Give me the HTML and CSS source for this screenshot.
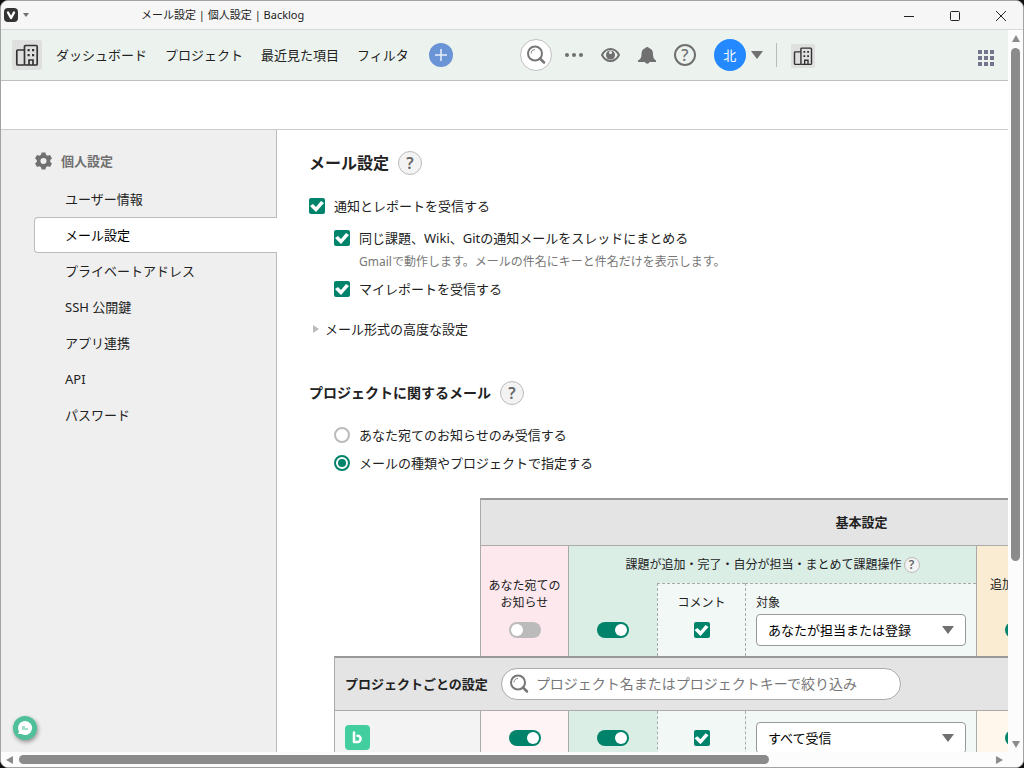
FILE: index.html
```html
<!DOCTYPE html>
<html lang="ja">
<head>
    <meta charset="UTF-8">
    <meta name="viewport" content="width=device-width, initial-scale=1.0">
    <title>メール設定 | 個人設定 | Backlog</title>
    <link rel="stylesheet" href="styles.css">
</head>
<body>

<svg class="defs" aria-hidden="true">
    <symbol id="building" viewBox="0 0 24 24">
        <path d="M9 7H2.800a1 1 0 0 0-1 1v13a1 1 0 0 0 1 1H9M10.500 2.500h10.700a1 1 0 0 1 1 1V21a1 1 0 0 1-1 1H10.500a1 1 0 0 1-1-1V3.500a1 1 0 0 1 1-1zM14 22v-5h4v5" fill="none" stroke="#333" stroke-width="1.700"/>
        <path d="M12.500 6h2.200v2.200h-2.200zM17 6h2.200v2.200H17zM12.500 11h2.200v2.200h-2.200zM17 11h2.200v2.200H17z" fill="#333"/>
    </symbol>
    <symbol id="search" viewBox="0 0 20 20">
        <circle cx="9" cy="8.500" r="7" fill="none" stroke="#777" stroke-width="2"/>
        <path d="M5 8.500a4 4 0 0 1 4-4" fill="none" stroke="#888" stroke-width="1"/>
        <path d="M14 13.500l4 4" stroke="#777" stroke-width="2.500" stroke-linecap="round"/>
    </symbol>
</svg>

<div class="window">
    <div class="titlebar">
        <svg class="app-icon" viewBox="0 0 14 14"><rect width="14" height="14" rx="4" fill="#333"/><path d="M4 4.500l3 5.500 3-5.500" fill="none" stroke="#fff" stroke-width="2.400" stroke-linecap="round" stroke-linejoin="round"/></svg>
        <span class="caret caret-small"></span>
        <span class="window-title">メール設定 | 個人設定 | Backlog</span>
        <div class="window-buttons">
            <button aria-label="最小化"><svg viewBox="0 0 12 12"><path d="M1 6.500h10"/></svg></button>
            <button aria-label="最大化"><svg viewBox="0 0 12 12"><rect x="1.500" y="1.500" width="9" height="9" rx="1"/></svg></button>
            <button aria-label="閉じる"><svg viewBox="0 0 12 12"><path d="M1 1l10 10M11 1L1 11"/></svg></button>
        </div>
    </div>

    <div class="viewport">
        <div class="page">
            <header class="header">
                <a href="#" class="space-icon" aria-label="スペース"><svg><use href="#building"/></svg></a>
                <nav class="nav">
                    <a href="#">ダッシュボード</a>
                    <a href="#">プロジェクト</a>
                    <a href="#">最近見た項目</a>
                    <a href="#">フィルタ</a>
                </nav>
                <button class="add" aria-label="追加"><svg viewBox="0 0 24 24"><path d="M12 6v12M6 12h12" stroke="#e9f0fa" stroke-width="1.500"/></svg></button>
                <div class="tools">
                    <button class="search-button" aria-label="検索"><svg><use href="#search"/></svg></button>
                    <button class="tool" aria-label="その他"><svg viewBox="0 0 22 22"><g fill="#707070"><circle cx="4" cy="11" r="2"/><circle cx="11" cy="11" r="2"/><circle cx="18" cy="11" r="2"/></g></svg></button>
                    <button class="tool" aria-label="ウォッチ"><svg viewBox="0 0 22 22"><path d="M2 11c2-4 5-6 8.500-6s6.500 2 8.500 6c-2 4-5 6-8.500 6S4 15 2 11z" fill="none" stroke="#707070" stroke-width="2"/><circle cx="10.500" cy="11" r="4.500" fill="#707070"/><circle cx="10.500" cy="8.500" r="1.500" fill="#ecf3ef"/></svg></button>
                    <button class="tool" aria-label="お知らせ"><svg viewBox="0 0 22 22"><path d="M8.500 4a2 2 0 0 1 3.500 0c3 1 4 3 4 6 0 3 .5 5 3 6.500V18h-6.500a2.300 2.300 0 0 1-4.500 0H1v-1.500C4 15 4.500 13 4.500 10c0-3 1-5 4-6z" fill="#707070"/></svg></button>
                    <button class="tool" aria-label="ヘルプ"><span class="round-help">?</span></button>
                    <button class="avatar">北</button>
                </div>
                <span class="caret"></span>
                <span class="divider"></span>
                <a href="#" class="space-icon space-icon-small" aria-label="組織"><svg><use href="#building"/></svg></a>
                <button class="apps" aria-label="アプリ一覧"><svg viewBox="0 0 16 16"><path d="M0 0h4v4H0zM6 0h4v4H6zM12 0h4v4h-4zM0 6h4v4H0zM6 6h4v4H6zM12 6h4v4h-4zM0 12h4v4H0zM6 12h4v4H6zM12 12h4v4h-4z" fill="#74748c"/></svg></button>
            </header>

            <div class="subheader"></div>

            <div class="content">
                <aside class="sidebar">
                    <div class="sidebar-title">
                        <svg viewBox="0 0 20 20"><path fill="#707070" fill-rule="evenodd" d="M8 1h4l.6 2.400 1.900 1.100 2.400-.7 2 3.500-1.800 1.700v2l1.800 1.700-2 3.500-2.400-.7-1.900 1.100L12 19H8l-.6-2.400-1.900-1.100-2.400.7-2-3.500L2.900 11V9L1.100 7.300l2-3.500 2.400.7 1.900-1.100zM10 6.800a3.200 3.200 0 1 0 0 6.400 3.200 3.200 0 0 0 0-6.400z"/></svg>
                        個人設定
                    </div>
                    <ul class="menu">
                        <li><a href="#">ユーザー情報</a></li>
                        <li><a href="#" class="active">メール設定</a></li>
                        <li><a href="#">プライベートアドレス</a></li>
                        <li><a href="#">SSH 公開鍵</a></li>
                        <li><a href="#">アプリ連携</a></li>
                        <li><a href="#">API</a></li>
                        <li><a href="#">パスワード</a></li>
                    </ul>
                </aside>

                <main class="main">
                    <div class="heading">
                        <h1>メール設定</h1>
                        <button class="help" aria-label="ヘルプ">?</button>
                    </div>

                    <div class="receive">
                        <label class="option"><input type="checkbox" checked> 通知とレポートを受信する</label>
                        <div class="nested">
                            <label class="option"><input type="checkbox" checked> 同じ課題、Wiki、Gitの通知メールをスレッドにまとめる</label>
                            <p class="note">Gmailで動作します。メールの件名にキーと件名だけを表示します。</p>
                            <label class="option"><input type="checkbox" checked> マイレポートを受信する</label>
                        </div>
                    </div>

                    <details class="advanced">
                        <summary>メール形式の高度な設定</summary>
                    </details>

                    <div class="heading">
                        <h2>プロジェクトに関するメール</h2>
                        <button class="help" aria-label="ヘルプ">?</button>
                    </div>

                    <div class="choices">
                        <label class="option"><input type="radio" name="target"> あなた宛てのお知らせのみ受信する</label>
                        <label class="option"><input type="radio" name="target" checked> メールの種類やプロジェクトで指定する</label>
                    </div>

                    <table class="settings">
                        <colgroup>
                            <col class="col-name">
                            <col class="col-switch">
                            <col class="col-issue">
                            <col class="col-switch">
                            <col class="col-target">
                            <col class="col-switch">
                            <col class="col-rest">
                        </colgroup>
                        <thead>
                            <tr class="row-basic">
                                <td class="blank" rowspan="3"></td>
                                <th colspan="6">基本設定</th>
                            </tr>
                            <tr class="row-group">
                                <td class="pink" rowspan="2">
                                    <div class="stack">
                                        <label for="toMe">あなた宛ての<br>お知らせ</label>
                                        <input type="checkbox" class="switch" id="toMe">
                                    </div>
                                </td>
                                <td class="green" colspan="3">課題が追加・完了・自分が担当・まとめて課題操作<button class="help help-small" aria-label="ヘルプ">?</button></td>
                                <td class="orange" rowspan="2">
                                    <div class="stack">
                                        <label for="added">追加</label>
                                        <input type="checkbox" class="switch" id="added" checked>
                                    </div>
                                </td>
                                <td class="orange plain" rowspan="2"></td>
                            </tr>
                            <tr class="row-sub">
                                <td class="green"><div class="stack"><input type="checkbox" class="switch" aria-label="課題" checked></div></td>
                                <td class="light dashed">
                                    <div class="stack">
                                        <label for="comment">コメント</label>
                                        <input type="checkbox" id="comment" checked>
                                    </div>
                                </td>
                                <td class="light dashed target">
                                    <label for="scope">対象</label>
                                    <div class="select"><select id="scope"><option>あなたが担当または登録</option></select></div>
                                </td>
                            </tr>
                        </thead>
                        <tbody>
                            <tr class="row-search">
                                <th colspan="7">
                                    <div class="search-row">
                                        プロジェクトごとの設定
                                        <div class="search-box">
                                            <svg><use href="#search"/></svg>
                                            <input type="text" placeholder="プロジェクト名またはプロジェクトキーで絞り込み" aria-label="プロジェクトを絞り込み">
                                        </div>
                                    </div>
                                </th>
                            </tr>
                            <tr class="row-project">
                                <td class="name"><svg class="project-icon" viewBox="0 0 25 25"><rect width="25" height="25" rx="4" fill="#42ce9f"/><path d="M9 7.500v9.500h3.500a3 3 0 0 0 0-6.300" fill="none" stroke="#fff" stroke-width="2.500" stroke-linecap="round" stroke-linejoin="round"/></svg></td>
                                <td class="pink-light"><input type="checkbox" class="switch" aria-label="あなた宛て" checked></td>
                                <td class="green"><input type="checkbox" class="switch" aria-label="課題" checked></td>
                                <td class="light dashed"><input type="checkbox" aria-label="コメント" checked></td>
                                <td class="light dashed target"><div class="select"><select aria-label="対象"><option>すべて受信</option></select></div></td>
                                <td class="orange-light"><input type="checkbox" class="switch" aria-label="追加" checked></td>
                                <td class="orange-light plain"></td>
                            </tr>
                        </tbody>
                    </table>
                </main>
            </div>

            <button class="chat" aria-label="チャット"><svg viewBox="0 0 24 24"><path d="M12 5a7 7 0 1 1-3.500 13H5l1-2.500A7 7 0 0 1 12 5z" fill="#fff"/><path d="M9 11h3M9 13h6" stroke="#4fc09b" stroke-width="1.200"/></svg></button>
        </div>

        <div class="scroll scroll-y">
            <span class="arrow up"></span>
            <div class="track"><div class="thumb"></div></div>
            <span class="arrow down"></span>
        </div>
    </div>
    <div class="scroll scroll-x">
        <span class="arrow left"></span>
        <div class="track"><div class="thumb"></div></div>
        <span class="arrow right"></span>
    </div>
</div>

</body>
</html>
```
FILE: styles.css
```css
* {
    box-sizing: border-box;
}

body {
    margin: 0;
    background: #111;
    color: #222;
    font-family: "Noto Sans", "Noto Sans CJK JP", sans-serif;
    font-size: 13px;
    line-height: 20px;
}

h1, h2, p, ul {
    margin: 0;
    padding: 0;
}

a {
    color: inherit;
    text-decoration: none;
}

button {
    padding: 0;
    border: 0;
    background: none;
    color: inherit;
    font: inherit;
}

svg {
    display: block;
}

.defs {
    position: absolute;
    width: 0;
    height: 0;
}

.window {
    display: flex;
    flex-direction: column;
    height: 100vh;
    border: 1px solid #a2a2a2;
    border-radius: 8px;
    overflow: hidden;
    background: #fcfcfc;
}

/* title bar */

.titlebar {
    display: flex;
    align-items: center;
    flex: none;
    height: 29px;
    padding-left: 3px;
    border-bottom: 1px solid #d5dad7;
    background: #f6f6f6;
}

.app-icon {
    width: 14px;
    height: 14px;
}

.caret {
    border: 6px solid transparent;
    border-top: 8px solid #707070;
    border-bottom: 0;
}

.caret-small {
    margin-left: 5px;
    border-width: 4px 3px 0;
}

.window-title {
    margin-left: 112px;
    font-size: 11px;
}

.window-buttons {
    display: flex;
    margin-left: auto;
}

.window-buttons button {
    display: grid;
    place-items: center;
    width: 46px;
    height: 28px;
    padding: 2px 0 0 2px;
}

.window-buttons svg {
    width: 12px;
    height: 12px;
    fill: none;
    stroke: #222;
}

.viewport {
    display: flex;
    flex: 1;
    min-height: 0;
}

.page {
    position: relative;
    display: flex;
    flex-direction: column;
    flex: 1;
    min-width: 0;
    overflow: hidden;
    background: #fff;
}

/* header */

.header {
    display: flex;
    align-items: center;
    flex: none;
    height: 51px;
    padding: 0 14px 0 11px;
    border-bottom: 1px solid #bfbfbf;
    background: #ecf3ef;
}

.space-icon {
    display: grid;
    place-items: center;
    width: 30px;
    height: 30px;
    border-radius: 2px;
    background: #dfdfdf;
}

.space-icon svg {
    width: 24px;
    height: 24px;
}

.space-icon-small {
    width: 24px;
    height: 24px;
    margin: 2px 0 0 14px;
}

.space-icon-small svg {
    width: 20px;
    height: 20px;
}

.nav {
    display: flex;
    gap: 18px;
    margin-left: 14px;
    white-space: nowrap;
}

.add {
    width: 24px;
    height: 24px;
    margin-left: 20px;
    border-radius: 50%;
    background: #6b94d6;
}

.tools {
    display: flex;
    align-items: center;
    gap: 15px;
    margin-left: 67px;
}

.search-button {
    display: grid;
    place-items: center;
    width: 32px;
    height: 32px;
    margin-right: -4px;
    border: 1px solid #bfbfbf;
    border-radius: 50%;
    background: #fff;
}

.search-button svg,
.search-box svg {
    width: 20px;
    height: 20px;
}

.tool,
.tool svg {
    width: 22px;
    height: 22px;
}

.round-help {
    display: block;
    height: 22px;
    border: 2px solid #707070;
    border-radius: 50%;
    color: #707070;
    font-size: 16px;
    font-weight: 500;
    line-height: 18px;
}

.avatar {
    width: 32px;
    height: 32px;
    margin: 0 5px 0 3px;
    border-radius: 50%;
    background: #2489ff;
    color: #fff;
}

.divider {
    width: 1px;
    height: 24px;
    margin-left: 13px;
    background: #bbb;
}

.apps {
    width: 16px;
    height: 16px;
    margin: 6px 0 0 auto;
}

.subheader {
    flex: none;
    height: 49px;
    border-bottom: 1px solid #ccc;
}

.content {
    display: flex;
    flex: 1;
    min-height: 0;
}

/* sidebar */

.sidebar {
    flex: none;
    width: 276px;
    padding: 21px 0 0 33px;
    border-right: 1px solid #bbb;
    background: #efefef;
}

.sidebar-title {
    display: flex;
    align-items: center;
    gap: 8px;
    color: #707070;
    font-weight: 600;
}

.sidebar-title svg {
    width: 19px;
    height: 20px;
}

.menu {
    margin-top: 10px;
    list-style: none;
}

.menu a {
    display: block;
    padding: 8px 0 8px 31px;
}

.menu .active {
    margin-right: -1px;
    padding: 7px 0 7px 30px;
    border: 1px solid #bbb;
    border-right: 0;
    border-radius: 4px 0 0 4px;
    background: #fff;
    color: #000;
}

/* form */

.main {
    flex: 1;
    min-width: 0;
    padding: 21px 0 0 32px;
    overflow: hidden;
}

.heading {
    display: flex;
    align-items: center;
    gap: 9px;
}

h1 {
    font-size: 16px;
}

h2 {
    font-size: 14px;
}

.help {
    width: 24px;
    height: 24px;
    border: 1px solid #bbb;
    border-radius: 50%;
    background: #f3f3f3;
    color: #666;
    font-size: 16px;
    font-weight: 600;
    line-height: 22px;
}

.help-small {
    width: 16px;
    height: 16px;
    margin-left: 2px;
    font-size: 12px;
    line-height: 14px;
    vertical-align: middle;
}

.receive {
    margin-top: 19px;
}

.option {
    display: flex;
    align-items: center;
    gap: 9px;
    height: 24px;
}

.nested,
.choices {
    padding-left: 25px;
}

.nested {
    margin-top: 8px;
}

.note {
    margin: 1px 0 4px;
    padding-left: 25px;
    color: #777;
    font-size: 12px;
    line-height: 22px;
}

input[type="checkbox"],
input[type="radio"] {
    appearance: none;
    flex: none;
    width: 16px;
    height: 16px;
    margin: 0;
}

input[type="checkbox"] {
    border-radius: 2px;
    background: #00836b;
    vertical-align: middle;
}

input[type="checkbox"]::before {
    content: "";
    display: block;
    width: 16px;
    height: 16px;
    background: #fff;
    clip-path: polygon(1px 8px, 4px 6px, 7px 9px, 12px 3px, 15px 5px, 7px 14px);
}

input[type="radio"] {
    border: 2px solid #bbb;
    border-radius: 50%;
    background: #fff;
}

input[type="radio"]:checked {
    padding: 2px;
    border-color: #00836b;
    background: #00836b content-box;
}

input.switch {
    width: 32px;
    height: 16px;
    padding: 2px;
    border-radius: 8px;
    background: #bbb;
}

input.switch::before {
    width: 12px;
    height: 12px;
    border-radius: 50%;
    clip-path: none;
}

input.switch:checked {
    background: #00836b;
}

input.switch:checked::before {
    margin-left: auto;
}

.advanced {
    margin: 16px 0 40px;
}

.advanced summary {
    display: flex;
    align-items: center;
    gap: 6px;
    padding-left: 4px;
    line-height: 24px;
}

.advanced summary::before {
    content: "";
    border: 4px solid transparent;
    border-left: 6px solid #bbb;
    border-right: 0;
}

.choices {
    display: grid;
    gap: 4px;
    margin-top: 18px;
}

/* notification table */

.settings {
    width: 908px;
    margin: 23px 0 0 25px;
    border-collapse: separate;
    border-spacing: 0;
    table-layout: fixed;
    font-size: 12px;
    text-align: center;
}

.col-name {
    width: 146px;
}

.col-switch {
    width: 88px;
}

.col-issue {
    width: 89px;
}

.col-target {
    width: 231px;
}

.settings th,
.settings td {
    padding: 0;
    border: 0 solid #aaa;
    border-left-width: 1px;
}

.settings th {
    background: #e4e4e4;
    font-size: 13px;
}

.settings .blank,
.settings .plain {
    border-left: 0;
}

.row-basic {
    height: 48px;
}

.settings .row-basic th {
    padding-bottom: 2px;
    border-top: 2px solid #999;
    border-bottom-width: 1px;
}

.row-group {
    height: 37px;
}

.row-sub {
    height: 73px;
}

.pink {
    background: #fde8ed;
}

.pink-light {
    background: #fef3f5;
}

.green {
    background: #daeee6;
}

.light {
    background: #f2f8f6;
}

.orange {
    background: #faecd2;
}

.orange-light {
    background: #fff7ec;
}

.settings .dashed {
    border-left-style: dashed;
}

.settings .row-sub .dashed {
    border-top: 1px dashed #aaa;
}

.stack {
    display: flex;
    flex-direction: column;
    align-items: center;
    gap: 11px;
    line-height: 17px;
}

.row-group td,
.row-sub td {
    vertical-align: bottom;
}

.row-group .green {
    vertical-align: middle;
}

.row-group .stack,
.row-sub .stack {
    padding-bottom: 18px;
}

.orange .stack {
    justify-content: space-between;
    height: 80px;
}

.orange label {
    align-self: flex-start;
    padding-left: 13px;
}

.settings .target {
    padding: 0 10px;
    text-align: left;
}

.settings .row-sub .target {
    padding-bottom: 10px;
}

.row-sub .target label {
    display: block;
    margin-bottom: 1px;
}

.select {
    position: relative;
}

.select::after {
    content: "";
    position: absolute;
    top: 12px;
    right: 12px;
    border: 6px solid transparent;
    border-top: 8px solid #707070;
    border-bottom: 0;
    pointer-events: none;
}

.select select {
    appearance: none;
    display: block;
    width: 100%;
    height: 32px;
    padding: 0 11px;
    border: 1px solid #999;
    border-radius: 4px;
    background: #fff;
    color: #000;
    font: inherit;
    font-size: 13px;
}

.settings .row-search th {
    height: 55px;
    padding-left: 10px;
    border-top: 2px solid #999;
    border-bottom-width: 1px;
}

.search-row {
    display: flex;
    align-items: center;
    gap: 13px;
}

.search-box {
    display: flex;
    align-items: center;
    gap: 7px;
    width: 400px;
    height: 32px;
    padding: 0 7px;
    border: 1px solid #aaa;
    border-radius: 16px;
    background: #fff;
}

.search-box input {
    flex: 1;
    min-width: 0;
    padding: 0;
    border: 0;
    outline: 0;
    background: none;
    font: inherit;
    font-size: 14px;
    font-weight: 400;
}

.search-box input::placeholder {
    color: #777;
}

.row-project {
    height: 54px;
}

.settings .row-project td {
    padding-bottom: 1px;
}

.settings .name {
    padding-left: 10px;
    background: #f3f3f3;
}

.project-icon {
    width: 25px;
    height: 25px;
}

/* chat button */

.chat {
    position: absolute;
    bottom: 12px;
    left: 12px;
    width: 24px;
    height: 24px;
    border-radius: 50%;
    background: #4fc09b;
    box-shadow: 1px 2px 4px #0006;
}

/* scroll bars */

.scroll {
    display: flex;
    align-items: center;
    flex: none;
    background: #fcfcfc;
}

.scroll-y {
    flex-direction: column;
    width: 15px;
    padding: 5px 0 4px;
}

.scroll-x {
    height: 15px;
    padding: 0 20px 0 5px;
}

.scroll .track {
    flex: 1;
}

.scroll .thumb {
    border-radius: 5px;
    background: #8b8b8b;
}

.scroll-y .track {
    width: 9px;
    margin-top: 6px;
}

.scroll-y .thumb {
    height: 74%;
}

.scroll-x .track {
    margin: 0 3px 0 6px;
}

.scroll-x .thumb {
    width: 77%;
    height: 9px;
}

.arrow {
    border: 4px solid transparent;
}

.up {
    border-top: 0;
    border-bottom: 7px solid #8b8b8b;
}

.down {
    border-top: 7px solid #8b8b8b;
    border-bottom: 0;
}

.left {
    border-left: 0;
    border-right: 7px solid #8b8b8b;
}

.right {
    border-left: 7px solid #8b8b8b;
    border-right: 0;
}
```
